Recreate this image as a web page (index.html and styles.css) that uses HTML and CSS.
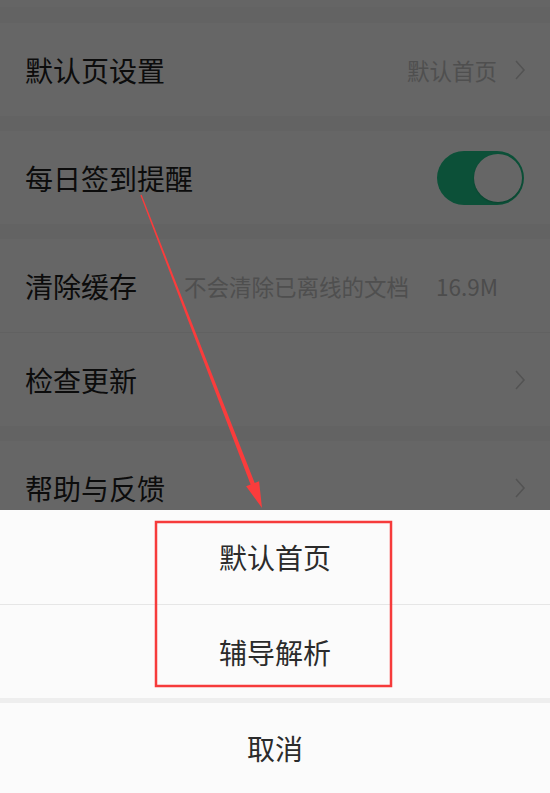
FILE: index.html
```html
<!DOCTYPE html>
<html lang="zh-CN">
<head>
    <meta charset="UTF-8">
    <meta name="viewport" content="width=device-width, initial-scale=1.0">
    <title>设置</title>
    <link rel="stylesheet" href="styles.css">
</head>
<body>
    <div class="screen">
        <!-- Settings list -->
        <div class="settings">
            <div class="gap gap-top"></div>
            <div class="row">
                <span class="row-title">默认页设置</span>
                <span class="row-extra">
                    <span class="row-value">默认首页</span>
                    <svg class="chevron" viewBox="0 0 12 22"><polyline points="2,2 10,11 2,20"/></svg>
                </span>
            </div>
            <div class="gap"></div>
            <div class="row">
                <span class="row-title">每日签到提醒</span>
                <span class="switch on"><span class="knob"></span></span>
            </div>
            <div class="gap"></div>
            <div class="group">
                <div class="row">
                    <span class="row-title">清除缓存</span>
                    <span class="row-extra">
                        <span class="row-value">不会清除已离线的文档</span>
                        <span class="row-value size">16.9M</span>
                    </span>
                </div>
                <div class="row">
                    <span class="row-title">检查更新</span>
                    <svg class="chevron" viewBox="0 0 12 22"><polyline points="2,2 10,11 2,20"/></svg>
                </div>
            </div>
            <div class="gap"></div>
            <div class="row">
                <span class="row-title">帮助与反馈</span>
                <svg class="chevron" viewBox="0 0 12 22"><polyline points="2,2 10,11 2,20"/></svg>
            </div>
        </div>

        <!-- Dim layer behind the action sheet -->
        <div class="mask"></div>

        <!-- Action sheet -->
        <div class="sheet">
            <div class="sheet-item">默认首页</div>
            <div class="sheet-item">辅导解析</div>
            <div class="sheet-cancel">取消</div>
        </div>

        <!-- Red markup on top -->
        <svg class="markup" viewBox="0 0 550 793">
            <polygon points="140.4,195.2 250.6,484.5 246.1,486.3 262,508 259.1,481.2 254.7,483.0 141.6,194.8"/>
            <rect x="156" y="522" width="235" height="164"/>
        </svg>
    </div>
</body>
</html>
```

FILE: styles.css
```css
body {
    margin: 0;
    padding: 0;
    font-family: "Noto Sans CJK SC", "Noto Sans", sans-serif;
    background-color: #ffffff;
}
.screen {
    position: relative;
    width: 550px;
    height: 793px;
    overflow: hidden;
    background-color: #f8f8f8;
}
.gap {
    height: 15px;
    background-color: #f8f8f8;
}
.gap-top {
    height: 23px;
    border-top: 7px solid #fdfdfd;
    box-sizing: border-box;
}
.row {
    height: 93px;
    display: flex;
    align-items: center;
    justify-content: space-between;
    padding: 0 24px 0 25px;
    background-color: #ffffff;
}
.group .row + .row {
    border-top: 1px solid #f2f2f2;
}
.row-title {
    font-size: 28px;
    color: #1e1e1e;
}
.row-extra {
    display: flex;
    align-items: center;
    gap: 27px;
}
.row-value {
    font-size: 22.5px;
    color: #c6c6c6;
}
.row-value.size {
    color: #bdbdbd;
    margin-right: 28px;
}
.row-extra .chevron {
    margin-left: -10px;
}
.chevron {
    width: 12px;
    height: 22px;
    fill: none;
    stroke: #cfcfcf;
    stroke-width: 1.6;
}
/* Toggle switch */
.switch {
    position: relative;
    width: 87px;
    height: 54px;
    border-radius: 27px;
    background-color: #e5e5e5;
    margin-right: 2px;
}
.switch.on {
    background-color: #1ec98d;
}
.switch .knob {
    position: absolute;
    top: 3px;
    right: 2px;
    width: 48px;
    height: 48px;
    border-radius: 50%;
    background-color: #ffffff;
    box-shadow: 0 1px 2px rgba(0, 0, 0, 0.2);
}
.mask {
    position: absolute;
    top: 0;
    left: 0;
    right: 0;
    bottom: 0;
    background: rgba(0, 0, 0, 0.6);
}
.sheet {
    position: absolute;
    left: 0;
    right: 0;
    bottom: 0;
    height: 283px;
    background-color: #fbfbfb;
    display: flex;
    flex-direction: column;
}
.sheet-item, .sheet-cancel {
    display: flex;
    align-items: center;
    justify-content: center;
    font-size: 28px;
    color: #2b2b2b;
}
.sheet-item {
    height: 94px;
}
.sheet-item + .sheet-item {
    height: 93px;
    border-top: 1px solid #e6e6e6;
}
.sheet-cancel {
    height: 90px;
    border-top: 5px solid #eeeeee;
}
.markup {
    position: absolute;
    top: 0;
    left: 0;
    width: 550px;
    height: 793px;
    pointer-events: none;
}
.markup polygon {
    fill: #fa3c3c;
}
.markup rect {
    fill: none;
    stroke: #f63b3b;
    stroke-width: 2.5;
}
```
